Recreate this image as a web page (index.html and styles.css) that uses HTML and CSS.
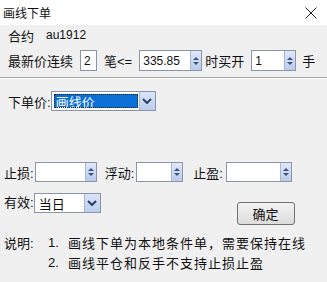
FILE: index.html
```html
<!DOCTYPE html>
<html>
<head>
<meta charset="utf-8">
<link rel="stylesheet" href="styles.css">
</head>
<body>
<div class="win">
  <div class="titlebar">
    <span class="title">画线下单</span>
    <svg class="close" width="12" height="12" viewBox="0 0 12 12"><path d="M0.5 0.5 L11.5 11.5 M11.5 0.5 L0.5 11.5" stroke="#222" stroke-width="1" fill="none"/></svg>
  </div>
  <div class="row r1"><span class="lbl">合约</span><span class="code">au1912</span></div>
  <div class="row r2">
    <span class="lbl">最新价连续</span>
    <div class="box b-cnt">2</div>
    <span class="lbl l-bi">笔&lt;=</span>
    <div class="box b-price"><span class="val">335.85</span><span class="spin"><i class="up"></i><i class="dn"></i></span></div>
    <span class="lbl l-buy">时买开</span>
    <div class="box b-qty"><span class="val">1</span><span class="spin"><i class="up"></i><i class="dn"></i></span></div>
    <span class="lbl l-hand">手</span>
  </div>
  <div class="sep"></div>
  <div class="row r3">
    <span class="lbl">下单价:</span>
    <div class="select s-price"><span class="sel">画线价</span><span class="drop"><svg width="10" height="6" viewBox="0 0 10 6"><path d="M1 1 L5 5 L9 1" stroke="#2b3e6b" stroke-width="2" fill="none"/></svg></span></div>
  </div>
  <div class="row r4">
    <span class="lbl">止损:</span>
    <div class="box b-sl"><span class="val"></span><span class="spin"><i class="up"></i><i class="dn"></i></span></div>
    <span class="lbl l-float">浮动:</span>
    <div class="box b-fl"><span class="val"></span><span class="spin"><i class="up"></i><i class="dn"></i></span></div>
    <span class="lbl l-tp">止盈:</span>
    <div class="box b-tp"><span class="val"></span><span class="spin"><i class="up"></i><i class="dn"></i></span></div>
  </div>
  <div class="row r5">
    <span class="lbl">有效:</span>
    <div class="select s-valid"><span class="plain">当日</span><span class="drop"><svg width="10" height="6" viewBox="0 0 10 6"><path d="M1 1 L5 5 L9 1" stroke="#2b3e6b" stroke-width="2" fill="none"/></svg></span></div>
    <button class="ok">确定</button>
  </div>
  <div class="notes">
    <div class="nl"><span class="nh">说明:</span><span class="num">1.</span><span class="nt">画线下单为本地条件单，需要保持在线</span></div>
    <div class="nl"><span class="nh"></span><span class="num">2.</span><span class="nt">画线平仓和反手不支持止损止盈</span></div>
  </div>
</div>
</body>
</html>
```
FILE: styles.css
```css
* { box-sizing: border-box; }
html, body { margin: 0; padding: 0; }
body {
  width: 327px; height: 282px; overflow: hidden;
  background: #f0f0f0;
  font-family: "Liberation Sans", "Noto Sans CJK SC", sans-serif;
  font-size: 13px; color: #111;
}
.win { display: flex; flex-direction: column; }
.titlebar {
  height: 25px; background: #fff;
  display: flex; align-items: center; justify-content: space-between;
  padding: 0 10px 0 3px;
}
.title { font-size: 12px; }
.row { display: flex; align-items: center; }
.lbl { white-space: nowrap; }
.r1 { height: 18px; margin-top: 1px; padding-left: 8px; }
.code { margin-left: 12px; font-size: 12px; }
.r2 { height: 21px; margin-top: 6px; padding-left: 8px; }
.box {
  background: #fff; border: 1px solid #8a96a8; height: 21px;
  display: flex; align-items: center; font-size: 12px;
}
.b-cnt { width: 17px; margin-left: 7px; padding-left: 3px; }
.l-bi { margin-left: 7px; }
.b-price { width: 63px; margin-left: 7px; }
.l-buy { margin-left: 3px; }
.b-qty { width: 45px; margin-left: 7px; }
.l-hand { margin-left: 6px; }
.val { flex: 1; padding-left: 3px; }
.spin {
  width: 11px; height: 100%;
  background: linear-gradient(to bottom, #dfe8f8, #b9cbec);
  border-left: 1px solid #a6b7d6;
  display: flex; flex-direction: column; align-items: center; justify-content: center; gap: 2px;
}
.spin i { width: 0; height: 0; border-left: 3px solid transparent; border-right: 3px solid transparent; }
.spin .up { border-bottom: 3px solid #3d5179; }
.spin .dn { border-top: 3px solid #3d5179; }
.sep { height: 2px; margin-top: 6px; border-top: 1px solid #a8a8a8; border-bottom: 1px solid #fff; }
.r3 { height: 20px; margin-top: 12px; padding-left: 8px; }
.select {
  height: 20px; border: 1px solid #8a96a8; background: #fff;
  display: flex; align-items: center; padding: 2px; font-size: 13px;
}
.s-price { width: 105px; margin-left: 0; }
.sel {
  flex: 1; height: 100%; background: #0a6fd6; color: #fff;
  outline: 1px dotted #222; outline-offset: -1px;
  display: flex; align-items: center; padding-left: 2px;
}
.plain { flex: 1; padding-left: 2px; }
.drop {
  width: 16px; height: 18px; margin: -2px -2px -2px 1px;
  background: linear-gradient(to bottom, #d9e4f8, #bccdee);
  border-left: 1px solid #a6b7d6;
  display: flex; align-items: center; justify-content: center;
}
.r4 { height: 20px; margin-top: 51px; padding-left: 4px; }
.r4 .box { height: 20px; }
.b-sl { width: 62px; margin-left: 1px; }
.l-float { margin-left: 8px; }
.b-fl { width: 47px; margin-left: 2px; }
.l-tp { margin-left: 10px; }
.b-tp { width: 66px; margin-left: 3px; }
.r5 { margin-top: 11px; padding-left: 4px; align-items: flex-start; height: 32px; }
.r5 .lbl { line-height: 20px; }
.s-valid { width: 67px; margin-left: 0; }
.ok {
  margin-left: 136px; margin-top: 9px;
  width: 58px; height: 23px; border: 1px solid #707070; border-radius: 3px;
  background: linear-gradient(to bottom, #f4f4f4, #dcdcdc);
  font-family: "Noto Sans CJK SC", sans-serif; font-size: 13px; color: #111; padding: 0;
}
.notes { margin-top: 7px; padding-left: 4px; }
.nl { display: flex; height: 20px; align-items: center; }
.nh { width: 44px; }
.num { width: 20px; font-size: 13px; }
.nt { letter-spacing: 1px; }
```
